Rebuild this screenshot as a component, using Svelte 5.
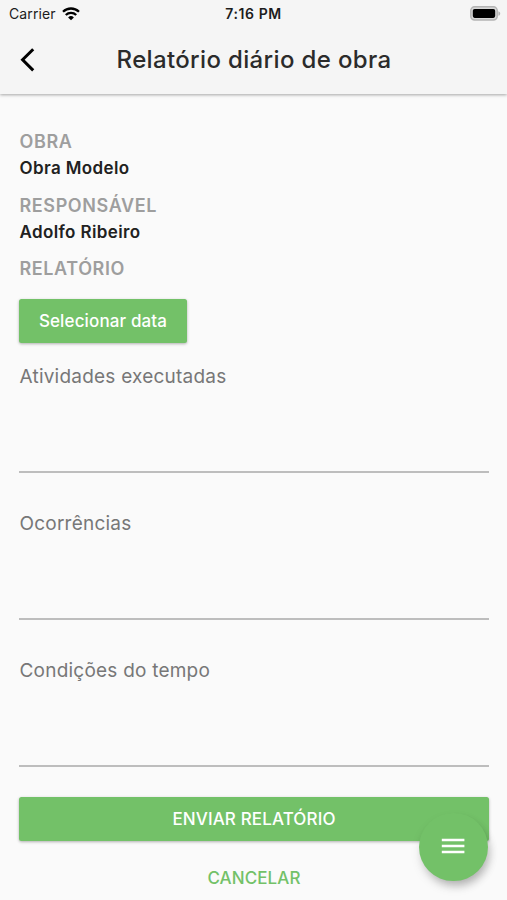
<script lang="ts">
  const info = [
    { label: 'OBRA', value: 'Obra Modelo' },
    { label: 'RESPONSÁVEL', value: 'Adolfo Ribeiro' },
  ];

  let fields = $state([
    { id: 'atividades', label: 'Atividades executadas', text: '' },
    { id: 'ocorrencias', label: 'Ocorrências', text: '' },
    { id: 'tempo', label: 'Condições do tempo', text: '' },
  ]);
</script>

<div class="screen">
  <header>
    <div class="status">
      <div class="carrier">
        <span>Carrier</span>
        <svg class="wifi" viewBox="0 0 18 14" width="18" height="14">
          <path d="M1 4.8a11.4 11.4 0 0 1 16 0" />
          <path d="M3.8 8a7.4 7.4 0 0 1 10.4 0" />
          <path class="dot" d="M9 13.2 6.1 10.4a4.2 4.2 0 0 1 5.8 0z" />
        </svg>
      </div>
      <span class="time">7:16 PM</span>
      <svg class="battery" viewBox="0 0 31 15" width="31" height="15">
        <rect x=".8" y=".8" width="26.4" height="13.2" rx="3.8" fill="#d8d8d8" stroke="#b4b4b4" stroke-width="1.5" />
        <rect x="2.8" y="2.9" width="22.4" height="9" rx="1.8" />
        <path d="M28.4 5.2c2.4.8 2.4 3.8 0 4.6z" fill="#b4b4b4" />
      </svg>
    </div>
    <div class="appbar">
      <button class="back" aria-label="Voltar">
        <svg viewBox="0 0 16 24" width="16" height="24">
          <path d="M13.2 1.2 2.6 11.8l10.6 10.6" />
        </svg>
      </button>
      <h1>Relatório diário de obra</h1>
    </div>
  </header>

  <main>
    {#each info as item}
      <div class="label">{item.label}</div>
      <div class="value">{item.value}</div>
    {/each}
    <div class="label">RELATÓRIO</div>

    <button class="raised date">Selecionar data</button>

    {#each fields as field}
      <div class="field">
        <label for={field.id}>{field.label}</label>
        <textarea id={field.id} bind:value={field.text}></textarea>
      </div>
    {/each}

    <button class="raised send">ENVIAR RELATÓRIO</button>
    <button class="cancel">CANCELAR</button>
  </main>

  <button class="fab" aria-label="Menu">
    <svg viewBox="0 0 24 16" width="24" height="16">
      <path d="M.8 2h22.6M.8 8h22.6M.8 14h22.6" />
    </svg>
  </button>
</div>

<style>
  :global(body) {
    margin: 0;
    background: #fafafa;
    font-family: Inter, Roboto, 'Liberation Sans', sans-serif;
  }

  .screen {
    position: relative;
    height: 900px;
    overflow: hidden;
    background: #fafafa;
  }

  header {
    height: 94px;
    background: #f5f5f5;
    box-shadow: 0 1px 3px rgba(0, 0, 0, 0.34);
  }

  .status {
    display: grid;
    grid-template-columns: 1fr auto 1fr;
    align-items: center;
    height: 27px;
    padding: 0 6px 0 9px;
    font-size: 14px;
    color: #1c1c1c;
  }

  .carrier {
    display: flex;
    align-items: center;
    gap: 6px;
  }

  .carrier span {
    letter-spacing: 0.1px;
  }

  .wifi {
    fill: none;
    stroke: #000;
    stroke-width: 2.3;
  }

  .wifi .dot {
    fill: #000;
    stroke: none;
  }

  .time {
    margin-right: 3px;
    font-weight: 600;
    font-size: 14px;
    letter-spacing: 0.6px;
  }

  .battery {
    justify-self: end;
    margin-top: -1px;
  }

  .appbar {
    display: grid;
    grid-template-columns: 56px 1fr 56px;
    align-items: center;
    height: 66px;
  }

  button {
    padding: 0;
    border: 0;
    background: none;
    font: inherit;
    cursor: pointer;
  }

  .back {
    display: flex;
    justify-content: center;
  }

  .back path {
    fill: none;
    stroke: #000;
    stroke-width: 3;
  }

  h1 {
    margin: 0;
    padding-left: 1px;
    color: #2b2b2b;
    font-size: 24px;
    font-weight: 450;
    line-height: 30px;
    letter-spacing: 0.35px;
    text-align: center;
    white-space: nowrap;
  }

  main {
    display: flex;
    flex-direction: column;
    padding: 34px 18px 0 19px;
  }

  .label,
  .value {
    height: 27px;
    padding-left: 0.5px;
    line-height: 27px;
    font-weight: 600;
  }

  .label {
    color: #9e9e9e;
    font-size: 18px;
    letter-spacing: 0.6px;
  }

  .value {
    margin-bottom: 9.5px;
    color: #212121;
    font-size: 17px;
    letter-spacing: 0.38px;
  }

  .raised {
    height: 44px;
    border-radius: 2.5px;
    background: #73c168;
    box-shadow: 0 1px 3px rgba(0, 0, 0, 0.3);
    color: #fff;
    font-size: 17px;
    font-weight: 500;
    letter-spacing: 0.13px;
  }

  .date {
    width: 168px;
    margin: 17px 0 20px;
  }

  .field {
    height: 108px;
    margin-bottom: 36.75px;
    border-bottom: 2px solid #bdbdbd;
  }

  .field label {
    display: block;
    height: 27px;
    padding-left: 0.5px;
    line-height: 28px;
    color: #777;
    font-size: 19px;
    letter-spacing: 0.22px;
  }

  textarea {
    display: block;
    box-sizing: border-box;
    width: 100%;
    height: 80px;
    padding: 0;
    border: 0;
    outline: 0;
    background: transparent;
    color: #212121;
    font: inherit;
    resize: none;
  }

  .send {
    margin-top: -6.25px;
  }

  .cancel {
    align-self: center;
    margin-top: 15px;
    height: 44px;
    color: #73c168;
    font-size: 17px;
    font-weight: 500;
    letter-spacing: 0.1px;
  }

  .fab {
    position: absolute;
    right: 19.5px;
    bottom: 19px;
    display: flex;
    align-items: center;
    justify-content: center;
    width: 68.5px;
    height: 68.5px;
    border-radius: 50%;
    background: #73c168;
    box-shadow: 3px 6px 8px -2px rgba(0, 0, 0, 0.22), 1px 6px 12px -1px rgba(0, 0, 0, 0.12);
  }

  .fab svg {
    margin-bottom: 1px;
  }

  .fab path {
    stroke: #fff;
    stroke-width: 2.6;
  }
</style>
